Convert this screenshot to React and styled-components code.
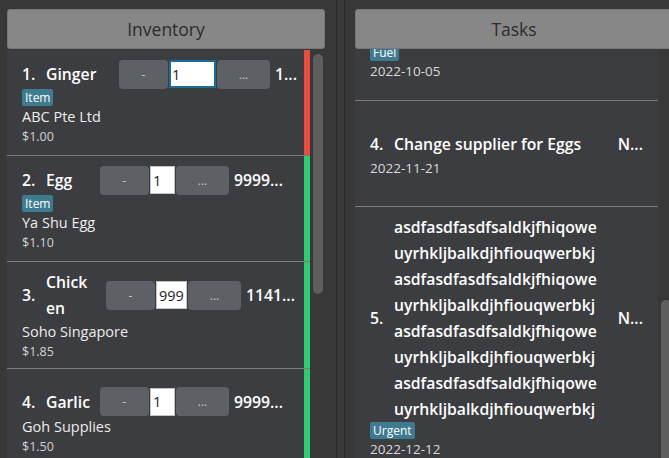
import React from 'react'
import styled, { createGlobalStyle } from 'styled-components'

const GlobalStyle = createGlobalStyle`
    html, body {
        margin: 0;
        padding: 0;
        background: #383838;
    }
    body {
        font-family: "Open Sans", "Noto Sans", sans-serif;
        overflow: hidden;
    }
`

const Window = styled.div`
    display: flex;
    width: 669px;
    height: 458px;
    overflow: hidden;
    background: #383838;
`

const Pane = styled.div`
    flex: none;
    display: flex;
    flex-direction: column;
    box-sizing: border-box;
    width: ${p => p.$left + 318 + 11}px;
    padding: 9px 11px 0 ${p => p.$left}px;
`

const Divider = styled.div`
    flex: none;
    width: 7px;
    border-left: 1px solid #2a2a2a;
    border-right: 1px solid #2a2a2a;
    background: #393939;
`

const Header = styled.div`
    flex: none;
    height: 40px;
    box-sizing: border-box;
    display: flex;
    align-items: center;
    justify-content: center;
    background: #878787;
    border: 1px solid #767676;
    border-radius: 3px;
    color: #2c2c2c;
    font-size: 17.5px;
    font-weight: 500;
`

const Body = styled.div`
    flex: 1;
    min-height: 0;
    display: flex;
`

const List = styled.div`
    width: 303px;
    flex: none;
    overflow: hidden;
`

const ListInner = styled.div`
    padding-top: 1px;
    margin-top: ${p => -p.$scroll}px;
`

const ScrollTrack = styled.div`
    width: 15px;
    flex: none;
`

const Thumb = styled.div`
    width: 10px;
    height: ${p => p.$len}px;
    margin: ${p => p.$top}px 0 0 3px;
    background: #5e5e5e;
    border-radius: 5px;
`

const Cell = styled.div`
    display: flex;
    min-height: 106px;
    box-sizing: border-box;
    background: #3c3d40;
    border-bottom: 1px solid #7b7b7b;
`

const CellBody = styled.div`
    flex: 1;
    min-width: 0;
    display: flex;
    flex-direction: column;
    justify-content: center;
    padding: 7px 15px;
`

const StatusBar = styled.div`
    flex: none;
    width: 6px;
    background: ${p => p.$color};
`

const TitleRow = styled.div`
    display: flex;
    align-items: center;
    min-height: 29px;
`

const Index = styled.div`
    flex: none;
    width: 24px;
    color: #ffffff;
    font-size: 15.75px;
    font-weight: 600;
    line-height: 26px;
`

const Name = styled.div`
    flex: none;
    width: ${p => p.$w}px;
    color: #ffffff;
    font-size: 15.75px;
    font-weight: 600;
    line-height: 26px;
`

const Title = styled.div`
    flex: 1;
    color: #ffffff;
    font-size: 15.75px;
    font-weight: 600;
    line-height: 26px;
`

const Controls = styled.div`
    flex: none;
    display: flex;
    align-items: center;
    gap: 1px;
`

const Btn = styled.button`
    width: ${p => p.$w}px;
    height: 29px;
    padding: 0;
    border: none;
    border-radius: 4px;
    background: #5d6064;
    color: #c9c9c9;
    font-family: inherit;
    font-size: 12px;
    display: flex;
    align-items: center;
    justify-content: center;
`

const QtyInput = styled.input`
    width: ${p => p.$w}px;
    height: 28px;
    box-sizing: border-box;
    margin: 0;
    padding: 0 0 0 2px;
    background: #ffffff;
    border: 1px solid ${p => (p.$focused ? '#1a6d96' : '#c4c4c4')};
    box-shadow: ${p => (p.$focused ? 'inset 0 0 0 1px #1a6d96' : 'none')};
    color: #1e1e1e;
    font-family: inherit;
    font-size: 14.5px;
    outline: none;
`

const Qty = styled.div`
    flex: none;
    margin-left: 5px;
    color: #ffffff;
    font-size: 15.75px;
    font-weight: 600;
    white-space: nowrap;
`

const Status = styled.div`
    flex: none;
    margin-left: 10px;
    color: #ffffff;
    font-size: 15.75px;
    font-weight: 600;
`

const Tag = styled.span`
    align-self: flex-start;
    background: #3e7b91;
    color: #ffffff;
    font-size: 12px;
    line-height: 17px;
    padding: 0 3px;
    border-radius: 2px;
`

const Supplier = styled.div`
    color: #ececec;
    font-size: 14.5px;
    line-height: 22px;
`

const Price = styled.div`
    color: #d2d2d2;
    font-size: 12.5px;
    line-height: 18px;
`

const DateText = styled.div`
    color: #dadada;
    font-size: 13.5px;
    line-height: 20px;
`

const items = [
    { name: ['Ginger'], nameW: 73, qtyW: 47, qtyVal: '1', focused: true, qty: '1...', tag: 'Item', supplier: 'ABC Pte Ltd', price: '$1.00', color: '#e74c3c' },
    { name: ['Egg'], nameW: 54, qtyW: 25, qtyVal: '1', qty: '9999...', tag: 'Item', supplier: 'Ya Shu Egg', price: '$1.10', color: '#2ecc71' },
    { name: ['Chick', 'en'], nameW: 60, qtyW: 31, qtyVal: '999', qty: '1141...', supplier: 'Soho Singapore', price: '$1.85', color: '#2ecc71' },
    { name: ['Garlic'], nameW: 54, qtyW: 25, qtyVal: '1', qty: '9999...', supplier: 'Goh Supplies', price: '$1.50', color: '#2ecc71' },
]

const longLines = [
    'asdfasdfasdfsaldkjfhiqowe',
    'uyrhkljbalkdjhfiouqwerbkj',
    'asdfasdfasdfsaldkjfhiqowe',
    'uyrhkljbalkdjhfiouqwerbkj',
    'asdfasdfasdfsaldkjfhiqowe',
    'uyrhkljbalkdjhfiouqwerbkj',
    'asdfasdfasdfsaldkjfhiqowe',
    'uyrhkljbalkdjhfiouqwerbkj',
]

// task 3 is scrolled up under the header, only its tag and date show
const tasks = [
    { no: 3, lines: [], tag: 'Fuel', date: '2022-10-05' },
    { no: 4, lines: ['Change supplier for Eggs'], date: '2022-11-21' },
    { no: 5, lines: longLines, tag: 'Urgent', date: '2022-12-12' },
]

function ItemCell({ item, no }) {
    return (
        <Cell>
            <CellBody>
                <TitleRow>
                    <Index>{no}.</Index>
                    <Name $w={item.nameW}>
                        {item.name.map((part, i) => <div key={i}>{part}</div>)}
                    </Name>
                    <Controls>
                        <Btn $w={49}>-</Btn>
                        <QtyInput $w={item.qtyW} $focused={item.focused} value={item.qtyVal} readOnly />
                        <Btn $w={53}>...</Btn>
                    </Controls>
                    <Qty>{item.qty}</Qty>
                </TitleRow>
                {item.tag && <Tag>{item.tag}</Tag>}
                <Supplier>{item.supplier}</Supplier>
                <Price>{item.price}</Price>
            </CellBody>
            <StatusBar $color={item.color} />
        </Cell>
    )
}

function TaskCell({ task }) {
    const shown = task.lines.length > 0
    return (
        <Cell>
            <CellBody>
                <TitleRow>
                    {shown && <Index>{task.no}.</Index>}
                    <Title>
                        {task.lines.map((line, i) => <div key={i}>{line}</div>)}
                    </Title>
                    {shown && <Status>N...</Status>}
                </TitleRow>
                {task.tag && <Tag>{task.tag}</Tag>}
                <DateText>{task.date}</DateText>
            </CellBody>
        </Cell>
    )
}

export default function App() {
    return (
        <>
            <GlobalStyle />
            <Window>
                <Pane $left={7}>
                    <Header>Inventory</Header>
                    <Body>
                        <List>
                            <ListInner $scroll={0}>
                                {items.map((item, i) => <ItemCell key={i} item={item} no={i + 1} />)}
                            </ListInner>
                        </List>
                        <ScrollTrack>
                            <Thumb $top={5} $len={240} />
                        </ScrollTrack>
                    </Body>
                </Pane>
                <Divider />
                <Pane $left={10}>
                    <Header>Tasks</Header>
                    <Body>
                        <List>
                            <ListInner $scroll={55}>
                                {tasks.map(task => <TaskCell key={task.no} task={task} />)}
                            </ListInner>
                        </List>
                        <ScrollTrack>
                            <Thumb $top={251} $len={220} />
                        </ScrollTrack>
                    </Body>
                </Pane>
            </Window>
        </>
    )
}
